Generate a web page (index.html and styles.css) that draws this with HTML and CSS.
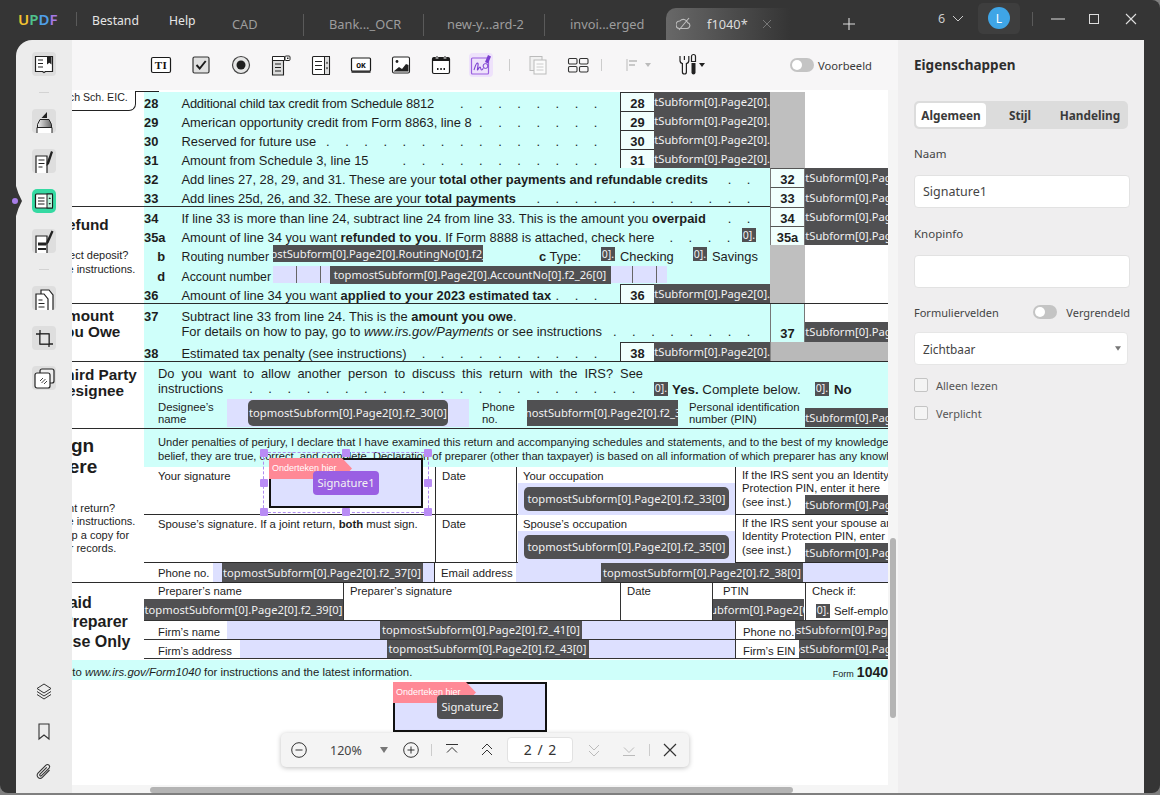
FILE: index.html
```html
<!DOCTYPE html>
<html lang="nl">
<head>
<meta charset="utf-8">
<title>UPDF - f1040</title>
<link rel="stylesheet" href="styles.css">
</head>
<body>
<div class="window">
  <header class="titlebar">
    <div class="logo"><span class="l-u">U</span><span class="l-p">P</span><span class="l-d">D</span><span class="l-f">F</span></div>
    <i class="tsep first"></i>
    <span class="menu m1">Bestand</span>
    <span class="menu m2">Help</span>
    <span class="tab t-cad">CAD</span><i class="tsep low"></i>
    <span class="tab t-bank">Bank..._OCR</span><i class="tsep low"></i>
    <span class="tab t-new">new-y...ard-2</span><i class="tsep low"></i>
    <span class="tab t-inv">invoi...erged</span>
    <div class="tab-active">
      <svg class="tab-ic" viewBox="0 0 16 16"><path d="M3 12.5h8a3 3 0 0 0 .6-5.9A4.4 4.4 0 0 0 4 5a3.8 3.8 0 0 0-1 7.5zM3 14 13 2" fill="none" stroke="#bdbdbd" stroke-width="1.1"/></svg>
      <span class="tab-name">f1040*</span>
      <svg class="tab-x" viewBox="0 0 10 10"><path d="M1 1l8 8M9 1 1 9" stroke="#777" stroke-width="1"/></svg>
    </div>
    <svg class="plus" viewBox="0 0 12 12"><path d="M6 0v12M0 6h12" stroke="#ddd" stroke-width="1.1"/></svg>
    <span class="count">6</span>
    <svg class="chev" viewBox="0 0 12 8"><path d="M1 1l5 5 5-5" fill="none" stroke="#ccc" stroke-width="1"/></svg>
    <div class="user"><span class="avatar">L</span></div>
    <i class="tsep ctl"></i>
    <svg class="wbtn w-min" viewBox="0 0 14 10"><path d="M0 5h14" stroke="#ddd" stroke-width="1.1"/></svg>
    <svg class="wbtn w-max" viewBox="0 0 10 10"><rect x=".5" y=".5" width="9" height="9" fill="none" stroke="#ddd"/></svg>
    <svg class="wbtn w-close" viewBox="0 0 12 12"><path d="M1 1l10 10M11 1 1 11" stroke="#ddd" stroke-width="1.1"/></svg>
  </header>

  <div class="main">
    <nav class="rail">
      <i class="notch"></i><i class="notch-dot"></i>
      <div class="rail-top">
        <span class="tile"><svg class="ic" viewBox="0 0 24 24"><path d="M3.5 4.5h17v15h-7l-1.5 1-1.5-1h-7z" fill="#fff" stroke="#222" stroke-width="1.2"/><path d="M6 8h5M6 11.500h5M6 15h5" stroke="#222" stroke-width="1.2"/><path d="M15 4.500h4.500v8l-2.200-1.800-2.300 1.800z" fill="#222"/></svg></span>
        <i class="rail-sep"></i>
        <span class="tile"><svg class="ic" viewBox="0 0 24 24"><defs><linearGradient id="hl" x1="0" x2="1"><stop offset="0" stop-color="#eee"/><stop offset="1" stop-color="#666"/></linearGradient></defs><path d="M15 3v6H9.500z" fill="#222"/><path d="M8 10.500h9l2.500 5v3h-14v-3z" fill="url(#hl)" stroke="#222" stroke-width="1"/><path d="M5 18.500h15V25H5z" fill="#fff" stroke="#222"/></svg></span>
        <span class="tile"><svg class="ic" viewBox="0 0 24 24"><path d="M4 7h11v18H4z" fill="#fff" stroke="#222" stroke-width="1.200"/><path d="M6.500 11h6M6.500 14.500h6M6.500 18h4" stroke="#222" stroke-width="1.200"/><path d="M19 2l2 1-4 12-2.500 2 .3-3.500z" fill="#222"/></svg></span>
        <span class="tile active"><svg class="ic" viewBox="0 0 24 24"><rect x="3.500" y="5" width="17" height="14" rx="1" fill="#fff" stroke="#1b1b1b" stroke-width="1.200"/><rect x="15" y="5" width="5.500" height="14" fill="#b6f0d8" stroke="#1b1b1b" stroke-width="1"/><path d="M6 9h6.500M6 12h6.500M6 15h6.500" stroke="#1b1b1b" stroke-width="1.200"/><path d="M16.500 10l1.300-1.800L19 10zM16.500 14l1.300 1.800L19 14z" fill="#1b1b1b"/></svg></span>
        <span class="tile"><svg class="ic" viewBox="0 0 24 24"><path d="M4 7h11v18H4z" fill="#fff" stroke="#222" stroke-width="1.200"/><path d="M6 13.500h8v3H6z" fill="#222"/><path d="M6 20h8" stroke="#222" stroke-width="1.800"/><path d="M19.500 1.500l2 1-5 11.500-2.500 2 .4-3.500z" fill="#222"/></svg></span>
        <i class="rail-sep"></i>
        <span class="tile"><svg class="ic" viewBox="0 0 24 24"><path d="M9 4h8l4 5v16H9z" fill="#fff" stroke="#222" stroke-width="1.200"/><path d="M4 8h8l4 5v12H4z" fill="#fff" stroke="#222" stroke-width="1.200"/><path d="M6.500 14h4M6.500 17.500h6M6.500 21h6" stroke="#222" stroke-width="1.200"/></svg></span>
        <span class="tile"><svg class="ic" viewBox="0 0 24 24"><path d="M8 4v14h13M4 8h13v13" fill="none" stroke="#222" stroke-width="1.300"/><rect x="8" y="8" width="9" height="10" fill="#e4e4e4" stroke="#222"/></svg></span>
        <span class="tile"><svg class="ic" viewBox="0 0 24 24"><rect x="8" y="3" width="14" height="14" rx="2" fill="#eee" stroke="#222" stroke-width="1.200"/><rect x="3" y="7" width="15" height="15" rx="2" fill="#fff" stroke="#222" stroke-width="1.200"/><path d="M8 15l3-3M9.500 17l4-4M12 18l3-3" stroke="#444" stroke-width="1"/></svg></span>
      </div>
      <div class="rail-bottom">
        <svg class="ic2" viewBox="0 0 20 20"><path d="M10 2l7 4.500-7 4.500-7-4.500z" fill="none" stroke="#333" stroke-width="1"/><path d="M3 9.500l7 4.500 7-4.500M3 12.500l7 4.500 7-4.500" fill="none" stroke="#333" stroke-width="1"/></svg>
        <svg class="ic2" viewBox="0 0 20 20"><path d="M5 2h10v15l-5-4-5 4z" fill="none" stroke="#333" stroke-width="1.100"/></svg>
        <svg class="ic2" viewBox="0 0 20 20"><path d="M15.500 8 8.300 15.300a3 3 0 0 1-4.300-4.200l8-8a2.200 2.200 0 0 1 3.100 3.100L7.500 13.700a1 1 0 0 1-1.500-1.500l6.800-6.800" fill="none" stroke="#333" stroke-width="1.100"/></svg>
      </div>
    </nav>

    <div class="work">
      <div class="tools">
        <svg class="tb" viewBox="0 0 24 24"><rect x="2.500" y="4.500" width="19" height="15" rx="1.500" fill="#fff" stroke="#1a1a1a" stroke-width="1.200"/><text x="12" y="16.300" class="tb-t">TI</text></svg>
        <svg class="tb" viewBox="0 0 24 24"><rect x="4" y="4" width="16" height="16" rx="1.500" fill="#e0e0e0" stroke="#333" stroke-width="1.200"/><path d="M7.500 12l3.200 3.500 6-7.500" fill="none" stroke="#1a1a1a" stroke-width="1.900"/></svg>
        <svg class="tb" viewBox="0 0 24 24"><circle cx="12" cy="12" r="8.500" fill="#e6e6e6" stroke="#444" stroke-width="1.200"/><circle cx="12" cy="12" r="4.500" fill="#1f1f1f"/></svg>
        <svg class="tb" viewBox="0 0 24 24"><path d="M3.500 6h11v16h-11z" fill="#ddd" stroke="#222" stroke-width="1.100"/><path d="M3.500 3.500h12v4h-12z" fill="#fff" stroke="#222"/><rect x="16" y="3" width="5" height="4.500" rx="1" fill="#fff" stroke="#222"/><path d="M18 5.200h1.500" stroke="#222" stroke-width="1.400"/><path d="M6 11h6M6 14.500h6M6 18h6" stroke="#222" stroke-width="1.200"/></svg>
        <svg class="tb" viewBox="0 0 24 24"><rect x="3.500" y="3.500" width="17" height="18" rx="1" fill="#fff" stroke="#222" stroke-width="1.100"/><rect x="15.500" y="3.500" width="5" height="18" fill="#ddd" stroke="#222"/><path d="M6 8.500h7M6 12.500h7M6 16.500h7" stroke="#222" stroke-width="1.200"/><path d="M16.800 10.500l1.200-2 1.200 2zM16.800 14.500l1.200 2 1.200-2z" fill="#222"/></svg>
        <svg class="tb" viewBox="0 0 24 24"><rect x="2.500" y="5" width="19" height="13" rx="1" fill="#fff" stroke="#1a1a1a" stroke-width="1.200"/><path d="M2.500 19h19" stroke="#1a1a1a" stroke-width="1.500"/><text x="12" y="14.800" class="tb-ok">OK</text></svg>
        <svg class="tb" viewBox="0 0 24 24"><rect x="3.500" y="4" width="17" height="16" rx="1.500" fill="#fff" stroke="#222" stroke-width="1.100"/><circle cx="8" cy="8.500" r="1.400" fill="#222"/><path d="M4.500 18.500l5.500-4.500 3 2 4-5 2.500 1v6.500z" fill="#222"/></svg>
        <svg class="tb" viewBox="0 0 24 24"><rect x="3.500" y="4.500" width="17" height="16" rx="1.500" fill="#fff" stroke="#1a1a1a" stroke-width="1.200"/><path d="M3.500 6a1.500 1.500 0 0 1 1.500-1.500h14A1.500 1.500 0 0 1 20.500 6v2h-17z" fill="#1a1a1a"/><path d="M8 3v3M16 3v3" stroke="#fff" stroke-width="2.400"/><path d="M8 3v3M16 3v3" stroke="#1a1a1a" stroke-width="1"/><path d="M8 16h1.500M11.300 16h1.500M14.500 16H16" stroke="#1a1a1a" stroke-width="1.800"/></svg>
        <span class="tb-on"><svg class="tb" viewBox="0 0 24 24"><rect x="2.500" y="5" width="17" height="16" rx="1" fill="none" stroke="#9a5fe0" stroke-width="1.200"/><path d="M5 17c1-3 2-7 3.500-7s-.5 7 0 7 1.500-3 2.500-3 .5 3 1.500 3 1-1.500 2-1.500" fill="none" stroke="#7b3fd0" stroke-width="1.100"/><path d="M19 2l3 1.500-3 7-3-1.500z" fill="#7b3fd0"/><circle cx="16.500" cy="13" r="2.400" fill="none" stroke="#7b3fd0"/></svg></span>
        <i class="sep"></i>
        <svg class="tb dim" viewBox="0 0 24 24"><rect x="4" y="3.500" width="12" height="14" fill="#f1f1f1" stroke="#bbb"/><rect x="8" y="7" width="12" height="14" fill="#fbfbfb" stroke="#bbb"/><path d="M10.500 11h7M10.500 14h7M10.500 17h7" stroke="#ccc"/></svg>
        <svg class="tb" viewBox="0 0 24 24"><rect x="2.500" y="5.500" width="8.500" height="5.500" rx="1.200" fill="none" stroke="#333" stroke-width="1.100"/><rect x="13.500" y="5.500" width="8.500" height="5.500" rx="1.200" fill="none" stroke="#333" stroke-width="1.100"/><rect x="2.500" y="13.500" width="8.500" height="5.500" rx="1.200" fill="none" stroke="#333" stroke-width="1.100"/><rect x="13.500" y="13.500" width="8.500" height="5.500" rx="1.200" fill="none" stroke="#333" stroke-width="1.100"/></svg>
        <i class="sep s2"></i>
        <svg class="tb-al" viewBox="0 0 26 14"><path d="M1 1v12" stroke="#bbb"/><path d="M3 3h8M3 7h6" stroke="#bbb" stroke-width="1.600"/><path d="M19 5h6l-3 4z" fill="#bbb"/></svg>
        <svg class="tb-tools" viewBox="0 0 30 24"><path d="M4 3v4.500a3 3 0 0 0 2.400 3V19a2 2 0 0 0 4 0v-8.500a3 3 0 0 0 2.400-3V3M8.400 3v4" fill="none" stroke="#222" stroke-width="1.200"/><path d="M15.500 3.500a2 2 0 0 1 4 0v5h-4z" fill="none" stroke="#222" stroke-width="1.200"/><path d="M15.500 10h4v9.500a2 2 0 0 1-4 0z" fill="#222"/><path d="M23 10h6l-3 4z" fill="#222"/></svg>
        <i class="toggle tg-tools"></i>
        <span class="tg-text">Voorbeeld</span>
      </div>

      <div class="viewer">
        <div class="doc">
          <div class="sheet">
            <section class="sec s1">
              <div class="side"><div class="eic"><span>Attach Sch. EIC.</span></div></div>
              <div class="body">
                <div class="r"><div class="cy"><b class="n">28</b><span class="tight">Additional child tax credit from Schedule 8812</span><i class="dots">........</i></div><b class="box">28</b><div class="f fa clip"><span>topmostSubform[0].Page2[0].f2_14[0]</span></div><i class="gray"></i><i class="rest"></i></div>
                <div class="r"><div class="cy"><b class="n">29</b><span>American opportunity credit from Form 8863, line 8</span><i class="dots">.......</i></div><b class="box">29</b><div class="f fa clip"><span>topmostSubform[0].Page2[0].f2_15[0]</span></div><i class="gray"></i><i class="rest"></i></div>
                <div class="r"><div class="cy"><b class="n">30</b><span>Reserved for future use</span><i class="dots">...............</i></div><b class="box">30</b><div class="f fa clip"><span>topmostSubform[0].Page2[0].f2_16[0]</span></div><i class="gray"></i><i class="rest"></i></div>
                <div class="r"><div class="cy"><b class="n">31</b><span>Amount from Schedule 3, line 15</span><i class="dots">...........</i></div><b class="box">31</b><div class="f fa clip"><span>topmostSubform[0].Page2[0].f2_17[0]</span></div><i class="gray"></i><i class="rest"></i></div>
                <div class="r"><div class="cy"><b class="n">32</b><span>Add lines 27, 28, 29, and 31. These are your <b>total other payments and refundable credits</b></span><i class="dots dl">..</i></div><b class="box wide">32</b><div class="f fb clip"><span>topmostSubform[0].Page2[0].f2_18[0]</span></div></div>
                <div class="r"><div class="cy"><b class="n">33</b><span>Add lines 25d, 26, and 32. These are your <b>total payments</b></span><i class="dots dl">............</i></div><b class="box wide">33</b><div class="f fb clip"><span>topmostSubform[0].Page2[0].f2_19[0]</span></div></div>
              </div>
            </section>

            <section class="sec s2">
              <div class="side ruled">
                <h3 class="ttl tr">Refund</h3>
                <p class="sm sm1">Direct deposit?</p>
                <p class="sm sm2">See instructions.</p>
              </div>
              <div class="body">
                <i class="rule r698"></i>
                <div class="r"><div class="cy"><b class="n">34</b><span>If line 33 is more than line 24, subtract line 24 from line 33. This is the amount you <b>overpaid</b></span><i class="dots dl">..</i></div><b class="box wide">34</b><div class="f fb clip"><span>topmostSubform[0].Page2[0].f2_20[0]</span></div></div>
                <div class="r"><div class="cy"><b class="n">35a</b><span>Amount of line 34 you want <b>refunded to you</b>. If Form 8888 is attached, check here</span><i class="dots dc">....</i><span class="f ck ck-r"><span>0].</span></span></div><b class="box wide">35a</b><div class="f fb clip"><span>topmostSubform[0].Page2[0].f2_21[0]</span></div></div>
                <div class="r"><div class="cy"><b class="n sub">b</b><span class="lbl92">Routing number</span><div class="f froute"><span>topmostSubform[0].Page2[0].RoutingNo[0].f2_22[0]</span></div><span class="ctype"><b>c</b> Type:</span><span class="f ck c1"><span>0].</span></span><span class="opt">Checking</span><span class="f ck c2"><span>0].</span></span><span class="opt">Savings</span></div><i class="gray"></i><i class="rest"></i></div>
                <div class="r"><div class="cy"><b class="n sub">d</b><span class="lbl92">Account number</span><div class="comb"><div class="f facct"><span>topmostSubform[0].Page2[0].AccountNo[0].f2_26[0]</span></div></div></div><i class="gray"></i><i class="rest"></i></div>
                <div class="r"><div class="cy"><b class="n">36</b><span>Amount of line 34 you want <b>applied to your 2023 estimated tax</b></span><i class="dots">...</i></div><b class="box">36</b><div class="f fa clip"><span>topmostSubform[0].Page2[0].f2_27[0]</span></div><i class="gray"></i><i class="rest"></i></div>
              </div>
            </section>

            <i class="rule full"></i>
            <section class="sec s3">
              <div class="side">
                <h3 class="ttl ta">Amount</h3>
                <h3 class="ttl ty">You Owe</h3>
              </div>
              <div class="body">
                <div class="r r38h">
                  <div class="cy col">
                    <div class="owe1"><b class="n">37</b><span>Subtract line 33 from line 24. This is the <b>amount you owe</b>.</span></div>
                    <div class="owe2"><i class="n"></i><span>For details on how to pay, go to <em>www.irs.gov/Payments</em> or see instructions</span><i class="dots dl">........</i></div>
                  </div>
                  <b class="box wide tint">37</b>
                  <div class="stackcol"><div class="f fb fb20 clip"><span>topmostSubform[0].Page2[0].f2_28[0]</span></div></div>
                </div>
                <div class="r"><div class="cy"><b class="n">38</b><span>Estimated tax penalty (see instructions)</span><i class="dots">..........</i></div><b class="box">38</b><div class="f fa clip"><span>topmostSubform[0].Page2[0].f2_29[0]</span></div><i class="gray g118"></i></div>
              </div>
            </section>

            <i class="rule full"></i>
            <section class="sec s4">
              <div class="side">
                <h3 class="ttl tt">Third Party</h3>
                <h3 class="ttl td">Designee</h3>
              </div>
              <div class="body third">
                <p class="q1">Do you want to allow another person to discuss this return with the IRS? See</p>
                <div class="q2"><span>instructions</span><i class="dots dq">.....................</i><span class="f ck"><span>0].</span></span><span class="yes"><b>Yes.</b> Complete below.</span><span class="f ck c3"><span>0].</span></span><b class="no">No</b></div>
                <div class="q3">
                  <span class="lbl2 l-des">Designee’s<br>name</span>
                  <div class="blue b-des"><div class="pill"><span>topmostSubform[0].Page2[0].f2_30[0]</span></div></div>
                  <span class="lbl2 l-ph">Phone<br>no.</span>
                  <div class="f fph"><span>topmostSubform[0].Page2[0].f2_31[0]</span></div>
                  <span class="lbl2 l-pin">Personal identification<br>number (PIN)</span>
                  <div class="f fb fpin clip"><span>topmostSubform[0].Page2[0].f2_32[0]</span></div>
                </div>
              </div>
            </section>

            <i class="rule full"></i>
            <section class="sec s5">
              <div class="side">
                <h3 class="big bs">Sign</h3>
                <h3 class="big bh">Here</h3>
                <p class="sm sj">Joint return?</p>
                <p class="sm si">See instructions.</p>
                <p class="sm sk">Keep a copy for</p>
                <p class="sm sy">your records.</p>
              </div>
              <div class="body">
                <div class="perj">
                  <p>Under penalties of perjury, I declare that I have examined this return and accompanying schedules and statements, and to the best of my knowledge and</p>
                  <p>belief, they are true, correct, and complete. Declaration of preparer (other than taxpayer) is based on all information of which preparer has any knowledge.</p>
                </div>
                <div class="srow">
                  <div class="c-sig"><span>Your signature</span>
                    <div class="sel">
                      <i class="h h1"></i><i class="h h2"></i><i class="h h3"></i><i class="h h4"></i><i class="h h5"></i><i class="h h6"></i><i class="h h7"></i><i class="h h8"></i>
                      <div class="sigf"><span class="tag">Onderteken hier</span><span class="sigpill purple">Signature1</span></div>
                    </div>
                  </div>
                  <div class="c-date">Date</div>
                  <div class="c-occ"><span>Your occupation</span><div class="blue b-occ"><div class="pill occ"><span>topmostSubform[0].Page2[0].f2_33[0]</span></div></div></div>
                  <div class="c-pin"><p>If the IRS sent you an Identity</p><p>Protection PIN, enter it here</p><p>(see inst.)</p><div class="f fb fp2 clip"><span>topmostSubform[0].Page2[0].f2_34[0]</span></div></div>
                </div>
                <div class="srow">
                  <div class="c-sig"><span>Spouse’s signature. If a joint return, <b>both</b> must sign.</span></div>
                  <div class="c-date">Date</div>
                  <div class="c-occ"><span>Spouse’s occupation</span><div class="blue b-occ"><div class="pill occ"><span>topmostSubform[0].Page2[0].f2_35[0]</span></div></div></div>
                  <div class="c-pin"><p>If the IRS sent your spouse an</p><p>Identity Protection PIN, enter it here</p><p>(see inst.)</p><div class="f fb fp2 clip"><span>topmostSubform[0].Page2[0].f2_36[0]</span></div></div>
                </div>
                <div class="prow">
                  <span class="p-lbl">Phone no.</span>
                  <div class="blue b-ph"><div class="f fphone"><span>topmostSubform[0].Page2[0].f2_37[0]</span></div></div>
                  <span class="p-em">Email address</span>
                  <div class="blue b-em"><div class="f femail"><span>topmostSubform[0].Page2[0].f2_38[0]</span></div></div>
                </div>
              </div>
            </section>

            <i class="rule full"></i>
            <section class="sec s6">
              <div class="side">
                <h3 class="ttl2 tp">Paid</h3>
                <h3 class="ttl2 tpr">Preparer</h3>
                <h3 class="ttl2 tu">Use Only</h3>
              </div>
              <div class="body">
                <div class="prow1">
                  <div class="pc pc-name"><span>Preparer’s name</span><div class="f fname"><span>topmostSubform[0].Page2[0].f2_39[0]</span></div></div>
                  <div class="pc pc-sig"><span>Preparer’s signature</span></div>
                  <div class="pc pc-date"><span>Date</span></div>
                  <div class="pc pc-ptin"><span>PTIN</span><div class="f fptin"><span>topmostSubform[0].Page2[0].f2_40[0]</span></div></div>
                  <div class="pc pc-chk"><span>Check if:</span><div class="selfe"><span class="f ck"><span>0].</span></span><span>Self-employed</span></div></div>
                </div>
                <div class="firm">
                  <span class="fl w83">Firm’s name</span>
                  <div class="blue b-firm1"><div class="f ffirm"><span>topmostSubform[0].Page2[0].f2_41[0]</span></div></div>
                  <span class="fl2 w60">Phone no.</span>
                  <div class="f fright clip2"><span>topmostSubform[0].Page2[0].f2_42[0]</span></div>
                </div>
                <div class="firm">
                  <span class="fl w96">Firm’s address</span>
                  <div class="blue b-firm2"><div class="f ffirm"><span>topmostSubform[0].Page2[0].f2_43[0]</span></div></div>
                  <span class="fl2 w64">Firm’s EIN</span>
                  <div class="f fright2 clip2"><span>topmostSubform[0].Page2[0].f2_44[0]</span></div>
                </div>
              </div>
            </section>

            <div class="foot"><span>Go to <em>www.irs.gov/Form1040</em> for instructions and the latest information.</span><span class="fform"><small>Form</small> <b>1040</b></span></div>

            <div class="sigf second"><span class="tag">Onderteken hier</span><span class="sigpill">Signature2</span></div>
          </div>
          <div class="hbar"><i></i></div>

          <div class="pager">
            <svg class="pg" viewBox="0 0 18 18"><circle cx="9" cy="9" r="7.300" fill="none" stroke="#333"/><path d="M5.500 9h7" stroke="#333"/></svg>
            <span class="zoom">120%</span>
            <svg class="caret" viewBox="0 0 8 6"><path d="M0 0h8L4 6z" fill="#777"/></svg>
            <svg class="pg" viewBox="0 0 18 18"><circle cx="9" cy="9" r="7.300" fill="none" stroke="#333"/><path d="M5.500 9h7M9 5.500v7" stroke="#333"/></svg>
            <i class="pg-sep"></i>
            <svg class="pg" viewBox="0 0 18 18"><path d="M3 3.500h12M4 11.500l5-5 5 5" fill="none" stroke="#333"/></svg>
            <svg class="pg" viewBox="0 0 18 18"><path d="M4 8l5-5 5 5M4 14l5-5 5 5" fill="none" stroke="#333"/></svg>
            <span class="pg-input">2 / 2</span>
            <svg class="pg" viewBox="0 0 18 18"><path d="M4 4l5 5 5-5M4 10l5 5 5-5" fill="none" stroke="#bbb"/></svg>
            <svg class="pg" viewBox="0 0 18 18"><path d="M4 6.500l5 5 5-5M3 14.500h12" fill="none" stroke="#bbb"/></svg>
            <i class="pg-sep"></i>
            <svg class="pg" viewBox="0 0 18 18"><path d="M3 3l12 12M15 3 3 15" fill="none" stroke="#333" stroke-width="1.200"/></svg>
          </div>
        </div>
        <div class="vbar"><i></i></div>
      </div>
    </div>

    <aside class="panel">
      <h2>Eigenschappen</h2>
      <div class="seg"><span class="on">Algemeen</span><span>Stijl</span><span>Handeling</span></div>
      <label class="fld-l">Naam</label>
      <div class="input">Signature1</div>
      <label class="fld-l l2">Knopinfo</label>
      <div class="input"></div>
      <div class="lockrow"><span>Formuliervelden</span><i class="toggle tg-lock"></i><span>Vergrendeld</span></div>
      <div class="select"><span>Zichtbaar</span><svg viewBox="0 0 8 6"><path d="M0 0h8L4 6z" fill="#777"/></svg></div>
      <div class="chk c-a"><i></i><span>Alleen lezen</span></div>
      <div class="chk"><i></i><span>Verplicht</span></div>
    </aside>
  </div>
</div>
</body>
</html>
```
FILE: styles.css
```css
* { box-sizing: border-box; }
html, body { margin: 0; height: 100%; }
body { background: #7f7f7f; font-family: "Noto Sans", sans-serif; overflow: hidden; }
i, em { font-style: normal; }
em { font-style: italic; }
p, h2, h3 { margin: 0; font-weight: normal; }

.window { width: 1160px; height: 793px; background: #353535; display: flex; flex-direction: column; border-radius: 0 8px 8px 8px; overflow: hidden; }

/* Title bar */
.titlebar { height: 40px; flex: none; display: flex; align-items: center; color: #e6e6e6; position: relative; }
.logo { margin-left: 18px; width: 36px; font: 600 15px "Noto Sans", sans-serif; letter-spacing: 0; margin-top: -3px; display: flex; }
.l-u { color: #f2c230; } .l-p { color: #4fc28c; } .l-d { color: #4f9fe8; } .l-f { color: #a679e6; }
.tsep { width: 1px; background: #5a5a5a; height: 14px; flex: none; }
.tsep.first { margin: -3px 0 0 22px; }
.tsep.low { height: 22px; margin-top: 9px; }
.menu { font-size: 12.200px; flex: none; margin-top: 0; }
.m1 { margin-left: 15px; width: 77px; }
.m2 { width: 63px; }
.tab { font-size: 12.800px; color: #9d9d9d; flex: none; margin-top: 8px; white-space: nowrap; }
.t-cad { width: 71px; }
.t-bank { margin-left: 25px; width: 94px; }
.t-new { margin-left: 23px; width: 97px; }
.t-inv { margin-left: 25px; width: 96px; }
.tab-active { width: 165px; height: 32px; margin-top: 8px; border-radius: 10px 0 0 0; background: linear-gradient(90deg, #686868, #353535 75%); display: flex; align-items: center; flex: none; }
.tab-ic { width: 16px; height: 16px; margin-left: 10px; }
.tab-name { font-size: 12.800px; color: #dcdcdc; margin-left: 15px; width: 55px; }
.tab-x { width: 10px; height: 10px; }
.plus { width: 12px; height: 12px; margin: 7px 0 0 12px; flex: none; }
.count { font-size: 12.500px; color: #ccc; margin: -3px 0 0 83px; width: 12px; flex: none; }
.chev { width: 12px; height: 8px; margin: -2px 0 0 2px; flex: none; }
.user { width: 42px; height: 31px; background: #3e3e3e; border-radius: 5px; margin: -4px 0 0 14px; display: flex; align-items: center; justify-content: center; flex: none; }
.avatar { width: 22px; height: 22px; border-radius: 50%; background: #3fa5e6; color: #fff; font-size: 12px; display: flex; align-items: center; justify-content: center; }
.tsep.ctl { margin: -3px 0 0 12px; }
.wbtn { flex: none; margin-top: -3px; }
.w-min { width: 14px; height: 10px; margin-left: 18px; }
.w-max { width: 10px; height: 10px; margin-left: 24px; }
.w-close { width: 12px; height: 12px; margin-left: 26px; }

/* Main */
.main { flex: 1; display: flex; padding-left: 16px; min-height: 0; }
.rail { width: 56px; flex: none; background: #ececec; border-radius: 16px 0 0 0; display: flex; flex-direction: column; justify-content: space-between; align-items: center; padding: 12px 0 11px; position: relative; }
.notch { position: absolute; left: 0; top: 146px; width: 6px; height: 30px; background: #353535; clip-path: polygon(0 0, 0 100%, 40% 75%, 100% 50%, 40% 25%); }
.notch-dot { position: absolute; left: -4px; top: 158px; width: 6px; height: 6px; border-radius: 50%; background: #a77de8; }
.rail-top { display: flex; flex-direction: column; align-items: center; gap: 16px; }
.tile { width: 24px; height: 24px; background: #dedede; border-radius: 4px; display: block; overflow: hidden; }
.tile.active { background: #35d9a2; border-radius: 5px; }
.ic { display: block; width: 24px; height: 24px; }
.rail-sep { width: 10px; height: 1px; background: #d3d3d3; margin: 0; }
.rail-bottom { display: flex; flex-direction: column; gap: 20px; align-items: center; }
.ic2 { display: block; width: 20px; height: 20px; }

.work { width: 826px; flex: none; display: flex; flex-direction: column; min-height: 0; }
.tools { height: 50px; flex: none; background: #f7f6f7; display: flex; align-items: center; padding-left: 77px; }
.tb { width: 24px; height: 24px; margin-right: 16px; flex: none; display: block; }
.tb-t { font: 700 11px "Liberation Serif", serif; text-anchor: middle; letter-spacing: .5px; fill: #111; }
.tb-ok { font: 700 8px "Liberation Mono", monospace; text-anchor: middle; fill: #111; }
.tb-on { width: 24px; height: 24px; background: #eee2fb; border-radius: 4px; flex: none; margin-right: 16px; }
.tb-on .tb { margin: 0; }
.sep { width: 1px; height: 12px; background: #ccc; margin-right: 16px; flex: none; }
.sep.s2 { margin-right: 24px; margin-left: -5px; }
.tb-al { width: 26px; height: 14px; margin-right: 24px; flex: none; }
.tb-tools { width: 30px; height: 24px; flex: none; }
.toggle { display: block; background: #c4c4c4; border-radius: 7px; width: 24px; height: 14px; position: relative; flex: none; }
.toggle::after { content: ""; position: absolute; left: 2px; top: 2px; width: 10px; height: 10px; background: #fff; border-radius: 50%; }
.tg-tools { margin-left: 84px; }
.tg-text { font-size: 11.200px; color: #3a3a3a; margin-left: 4px; white-space: nowrap; }

.viewer { flex: 1; display: flex; min-height: 0; background: #f5f5f5; }
.doc { width: 816px; flex: none; display: flex; flex-direction: column; position: relative; min-height: 0; }
.vbar { width: 10px; flex: none; background: #f5f5f5; padding-top: 448px; }
.vbar i { display: block; width: 6px; margin-left: 2px; height: 180px; border-radius: 3px; background: #b4b4b4; }
.hbar { flex: 1; background: #f5f5f5; padding: 2px 0 0 78px; }
.hbar i { display: block; width: 643px; height: 6px; border-radius: 3px; background: #b4b4b4; }

/* Sheet */
.sheet { height: 695px; flex: none; background: #fff; overflow: hidden; font: 12.900px/19px "Liberation Sans", sans-serif; color: #1d1d1d; }
.sec { display: flex; width: 816px; }
.side { width: 72px; flex: none; overflow: hidden; position: relative; }
.body { width: 744px; flex: none; }
.s1 { padding-top: 1.500px; height: 116px; position: relative; }
.s1::before { content: ""; position: absolute; left: 63px; top: 1px; width: 24px; height: 1px; background: #222; z-index: 2; }
.r { display: flex; height: 19.200px; line-height: 24px; }
.cy { flex: 1; min-width: 0; display: flex; background: #cffffa; white-space: nowrap; }
.n { width: 37.500px; flex: none; font-weight: 700; }
.n.sub { text-align: center; padding-right: 3px; }
.tight { letter-spacing: -.2px; }
.dots { flex: 1; text-align: right; letter-spacing: 15.550px; padding-right: 7px; overflow: hidden; min-width: 0; }
.dl { padding-right: 4px; }
.dc { margin-right: -4px; padding-right: 0; }
.dq { padding-right: 3px; flex: 1; }
.box { width: 34px; flex: none; text-align: center; background: #f0fffd; border-left: 1px solid #333; border-top: 1px solid #333; line-height: 22px; }
.box.wide { width: 35px; border-right: 1px solid #777; border-left: 1px solid #777; border-top: 1px solid #555; }
.box.tint { background: #cffffa; border-top: 0; padding-top: 21px; line-height: 18px; }
.f { background: #505052; color: #f2f2f2; display: flex; justify-content: center; overflow: hidden; white-space: nowrap; font: 11.200px/19px "Noto Sans", sans-serif; align-items: center; flex: none; }
.f span { flex: none; }
.clip { justify-content: flex-start; }
.clip > span { margin-left: -40px; }
.fa { width: 116px; }
.fb { width: 83px; }
.gray { width: 35px; flex: none; background: #bfbfbf; }
.g118 { width: 118px; background: #b9b9b9; border-left: 1px solid #888; }
.rest { width: 83px; flex: none; background: #fff; }
.eic { position: relative; width: 64px; height: 20px; border-right: 1px solid #222; border-bottom: 1px solid #222; border-radius: 0 0 7px 0; margin-top: -1px; font-size: 10.600px; line-height: 12px; white-space: nowrap; }
.eic span { display: block; margin-left: -22px; }
.rule { display: block; height: 1px; background: #2b2b2b; }
.rule.full { width: 816px; height: 1px; }
.r698 { width: 626px; }
.s2 { position: relative; }
.side.ruled { box-shadow: inset 0 1px 0 #2b2b2b; }
.ttl { margin: 0; font: 700 15.300px/16px "Liberation Sans", sans-serif; white-space: nowrap; margin-left: -16px; }
.tr { margin: 11px 0 0 -16px; }
.sm { font-size: 11px; line-height: 14px; white-space: nowrap; }
.sm1 { margin: 15px 0 0 -17px; }
.sm2 { margin-left: -18px; }
.lbl92 { width: 91.500px; flex: none; font-size: 12.300px; }
.froute { width: 210px; height: 17px; margin-top: 0; }
.ctype { margin-left: 56px; width: 62px; flex: none; }
.ck { width: 14px; height: 14px; font-size: 10.500px; margin-top: 2px; }
.ck-r { margin-right: 14px; }
.opt { margin-left: 5px; width: 73px; flex: none; }
.comb { width: 394px; height: 17px; flex: none; margin-top: 1px; display: flex; justify-content: center; background: #dde0ff repeating-linear-gradient(90deg, transparent 0 23px, #666 23px 24px); }
.facct { width: 281px; height: 18px; }
.col { flex-direction: column; }
.r38h { height: 38px; line-height: 15px; }
.owe1 { display: flex; padding-top: 5px; height: 20px; }
.owe2 { display: flex; height: 15px; }
.owe2 .dots { padding-right: 4px; }
.stackcol { width: 83px; flex: none; display: flex; flex-direction: column; justify-content: flex-end; background: #fff; }
.fb20 { height: 20px; }
.ta { margin-top: 4px; }
.tt { margin-top: 5px; }
.td { line-height: 15.500px; }
.s3 { height: 57px; }
.s4 { height: 66px; }
.third { background: #cffffa; padding-left: 14px; }
.q1 { width: 485px; text-align: justify; text-align-last: justify; line-height: 15px; padding-top: 4px; height: 19px; }
.q2 { display: flex; width: 730px; height: 18px; line-height: 15px; white-space: nowrap; align-items: flex-start; }
.q2 .dots { flex: 1; padding-right: 3px; }
.q2 .ck { margin-top: 1px; }
.yes { margin-left: 4px; width: 143px; flex: none; font-size: 13.300px; line-height: 17px; }
.no { margin-left: 5px; width: 54px; flex: none; line-height: 17px; font-size: 13.300px; }
.q3 { display: flex; height: 28px; align-items: stretch; }
.lbl2 { font-size: 11.300px; line-height: 12.500px; padding-top: 2px; white-space: nowrap; flex: none; }
.l-des { width: 69px; }
.blue { background: #dde0ff; }
.b-des { width: 242px; padding: 1px 21px; flex: none; }
.pill { height: 100%; border-radius: 5px; background: #505052; color: #f2f2f2; font: 11.200px/24px "Noto Sans", sans-serif; display: flex; align-items: center; justify-content: center; white-space: nowrap; }
.l-ph { margin-left: 13px; width: 45px; }
.fph { width: 151px; height: 26px; margin-top: 1px; }
.l-pin { margin-left: 11px; width: 116px; }
.fpin { margin-top: 9px; height: 19px; }
.big { font: 700 19px/21px "Liberation Sans", sans-serif; white-space: nowrap; margin-left: -17px; }
.bs { margin-top: 6px; margin-left: -19px; }
.sj { margin: 25px 0 0 -18px; }
.sm.sj, .sm.si, .sm.sk, .sm.sy { line-height: 13.500px; }
.si { margin-left: -18px; }
.sk { margin-left: -20px; }
.sy { margin-left: -20px; }
.s5 { height: 153px; }
.perj { background: #cffffa; height: 38px; padding: 6px 0 0 14px; font-size: 11.150px; line-height: 14px; white-space: nowrap; overflow: hidden; }
.srow { display: flex; height: 48px; border-bottom: 1px solid #2b2b2b; line-height: 14px; font-size: 11.300px; }
.c-sig { width: 292px; border-right: 1px solid #2b2b2b; padding: 2px 0 0 14px; position: relative; flex: none; }
.c-date { width: 81px; border-right: 1px solid #2b2b2b; padding: 2px 0 0 6px; flex: none; }
.c-occ { width: 219px; border-right: 1px solid #2b2b2b; padding: 2px 0 0 6px; flex: none; display: flex; flex-direction: column; }
.c-occ .blue { margin: 0 0 0 -5px; flex: 1; padding: 4px 6px; }
.c-pin { width: 152px; padding: 2px 0 0 6px; font-size: 11.200px; line-height: 13.500px; flex: none; position: relative; white-space: nowrap; overflow: hidden; }
.fp2 { position: absolute; right: 0; bottom: 0; height: 19px; }
.prow { display: flex; height: 19px; line-height: 20px; font-size: 11.300px; }
.p-lbl { width: 69px; padding-left: 14px; flex: none; white-space: nowrap; }
.b-ph { width: 222px; display: flex; justify-content: center; padding-left: 0; border-right: 1px solid #2b2b2b; flex: none; }
.fphone { width: 201px; margin-right: 3px; }
.p-em { width: 81px; padding-left: 6px; flex: none; white-space: nowrap; }
.b-em { width: 372px; display: flex; justify-content: center; flex: none; }
.femail { width: 202px; }
.s6 { height: 76px; }
.ttl2 { font: 700 16px/19.500px "Liberation Sans", sans-serif; white-space: nowrap; }
.tp { margin: 10px 0 0 -14px; }
.tpr { margin-left: -10px; }
.tu { margin-left: -11px; }
.prow1 { display: flex; height: 38px; font-size: 11.300px; line-height: 15px; border-bottom: 1px solid #333; }
.pc { flex: none; padding: 1px 0 0 6px; border-right: 1px solid #333; overflow: hidden; white-space: nowrap; }
.pc-name { width: 200px; padding-left: 0; }
.pc-name > span { padding-left: 14px; display: block; }
.fname { width: 199px; height: 22px; }
.pc-sig { width: 277px; }
.pc-date { width: 92px; }
.pc-ptin { width: 93px; padding-left: 0; }
.pc-ptin > span { display: block; padding-left: 10px; }
.fptin { width: 91px; height: 22px; }
.pc-chk { width: 82px; border-right: 0; }
.selfe { display: flex; margin: 3px 0 0 4px; line-height: 18px; gap: 4px; }
.firm { display: flex; height: 19px; line-height: 23px; font-size: 11.300px; white-space: nowrap; border-bottom: 1px solid #333; }
.firm .f { height: 18px; }
.fl { flex: none; padding-left: 14px; }
.w83 { width: 83px; }
.w96 { width: 96px; }
.b-firm1 { width: 508px; flex: none; display: flex; justify-content: center; }
.b-firm2 { width: 495px; flex: none; display: flex; justify-content: center; }
.ffirm { width: 202px; }
.fl2 { flex: none; padding-left: 7px; border-left: 1px solid #333; background: #fff; }
.w60 { width: 60px; }
.w64 { width: 64px; }
.fright { width: 93px; }
.fright2 { width: 89px; }
.clip2 { justify-content: flex-start; }
.clip2 > span { margin-left: -34px; }
.foot { height: 20px; background: #cffffa; display: flex; justify-content: space-between; font-size: 11.400px; line-height: 24px; white-space: nowrap; margin-top: 1px; }
.foot > span:first-child { margin-left: -18px; }
.fform small { font-size: 9px; }
.fform b { font-size: 14px; }

/* Signature widgets */
.sigf { width: 154px; height: 50px; background: #dde0ff; border: 2px solid #111; position: relative; display: flex; align-items: center; justify-content: center; }
.second { margin: 2px 0 0 321px; }
.sel { position: absolute; left: 119px; top: -15px; width: 166px; height: 61px; border: 1px dashed #b08cf0; padding: 5px; }
.h { position: absolute; width: 8px; height: 8px; background: #b98cf5; border-radius: 1px; }
.h1 { left: -4px; top: -4px; } .h2 { left: 78px; top: -4px; } .h3 { right: -4px; top: -4px; }
.h4 { left: -4px; top: 26px; } .h5 { right: -4px; top: 26px; }
.h6 { left: -4px; bottom: -4px; } .h7 { left: 78px; bottom: -4px; } .h8 { right: -4px; bottom: -4px; }
.tag { position: absolute; left: -2px; top: -2px; width: 83px; height: 21px; background: #ff8996; color: #fff; font-size: 9px; line-height: 21px; padding-left: 3px; white-space: nowrap; clip-path: polygon(0 0, 73px 0, 100% 50%, 73px 100%, 0 100%); }
.sigpill { position: relative; height: 24px; padding: 0 4px; border-radius: 4px; background: #505052; color: #f2f2f2; font: 11.200px/24px "Noto Sans", sans-serif; white-space: nowrap; }
.purple { background: #9a5fe3; }

/* Pager */
.pager { position: absolute; left: 209px; bottom: 26px; height: 34px; width: 408px; background: #f4f4f4; border-radius: 5px; box-shadow: 0 1px 5px rgba(0,0,0,.25); display: flex; align-items: center; padding-left: 9px; }
.pg { width: 18px; height: 18px; flex: none; margin-right: 17px; }
.zoom { font-size: 12.500px; color: #444; width: 51px; flex: none; margin-left: 5px; }
.caret { width: 8px; height: 6px; flex: none; margin: 0 14px 0 -1px; }
.pg-sep { width: 1px; height: 12px; background: #ccc; flex: none; margin: 0 11px 0 -6px; }
.pg-input { width: 66px; height: 26px; background: #fff; border: 1px solid #e2e2e2; border-radius: 4px; text-align: center; font-size: 14px; line-height: 24px; color: #333; margin: 0 12px 0 -6px; flex: none; word-spacing: 2px; }

/* Properties panel */
.panel { width: 246px; flex: none; background: #efeeef; padding: 0 14px 0 16px; color: #333; font-size: 11.500px; }
.panel h2 { font-size: 13.500px; font-weight: 700; line-height: 18px; margin-top: 16px; color: #2e2e2e; }
.seg { display: flex; height: 28px; width: 214px; background: #dcdcdc; border-radius: 5px; margin-top: 27px; padding: 2px; font-weight: 700; font-size: 11.800px; color: #3a3a3a; align-items: center; }
.seg span { text-align: center; line-height: 24px; width: 70px; }
.seg .on { background: #fff; border-radius: 4px; }
.seg span:nth-child(2) { width: 68px; }
.seg span:nth-child(3) { width: 72px; }
.fld-l { display: block; line-height: 16px; margin-top: 17px; font-size: 11.500px; color: #444; }
.fld-l.l2 { margin-top: 18px; }
.input { width: 216px; height: 33px; background: #fff; border: 1px solid #e2e2e2; border-radius: 4px; margin-top: 13px; padding-left: 8px; line-height: 31px; font-size: 12.500px; color: #444; }
.lockrow { display: flex; align-items: center; margin-top: 16px; width: 216px; font-size: 11px; color: #444; height: 16px; }
.tg-lock { margin-left: auto; margin-right: 9px; }
.select { width: 214px; height: 33px; background: #fff; border-radius: 4px; margin-top: 12px; padding: 0 8px; display: flex; align-items: center; justify-content: space-between; border: 1px solid #e6e6e6; font-size: 11.800px; color: #444; }
.select svg { width: 6px; height: 5px; margin-right: -2px; }
.chk { display: flex; align-items: center; gap: 8px; font-size: 11px; color: #555; height: 14px; margin-top: 14px; }
.chk.c-a { margin-top: 13px; }
.chk i { width: 14px; height: 14px; border: 1px solid #c4c4c4; background: #f4f4f4; border-radius: 2px; }
```
